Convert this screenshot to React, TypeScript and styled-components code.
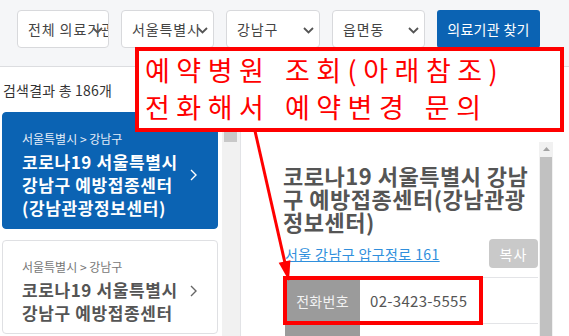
import React from "react";
import styled, { createGlobalStyle } from "styled-components";

const GlobalStyle = createGlobalStyle`
  html, body { margin: 0; padding: 0; background: #ffffff; }
  body {
    font-family: "Noto Sans CJK KR", "Noto Sans", sans-serif;
    overflow: hidden;
  }
  * { box-sizing: border-box; }
`;

const BLUE = "#0b63b3";
const RED = "#ff0000";

const Page = styled.div`
  position: relative;
  width: 569px;
  height: 336px;
  overflow: hidden;
  display: flex;
  flex-direction: column;
  background: #fff;
`;

const TopBar = styled.div`
  height: 67px;
  flex: none;
  background: #f5f6f8;
  border-bottom: 1px solid #dcdde0;
  display: flex;
  align-items: flex-start;
  gap: 12px;
  padding: 10px 0 0 17px;
`;

const SelectBox = styled.div<{ $w: number }>`
  position: relative;
  width: ${(p) => p.$w}px;
  height: 38px;
  background: #fff;
  border: 1px solid #d8d9dc;
  border-radius: 4px;
  display: flex;
  align-items: center;
  padding-left: 10px;
  font-size: 14px;
  letter-spacing: 0.9px;
  color: #444;
  white-space: nowrap;
  overflow: hidden;
`;

const SelectArrow = styled.svg`
  position: absolute;
  right: 5px;
  top: 16px;
  width: 11px;
  height: 7px;
`;

const SearchButton = styled.div`
  width: 103px;
  height: 38px;
  background: ${BLUE};
  color: #fff;
  border-radius: 3px;
  font-size: 14px;
  letter-spacing: 0.3px;
  display: flex;
  align-items: center;
  justify-content: center;
`;

const Body = styled.div`
  flex: 1;
  display: flex;
  min-height: 0;
`;

const ListColumn = styled.div`
  width: 241px;
  flex: none;
  display: flex;
  border-right: 1px solid #e2e3e6;
`;

const ListContent = styled.div`
  width: 222px;
  padding: 0 4px 0 2px;
  overflow: hidden;
`;

const ResultCount = styled.div`
  height: 45px;
  display: flex;
  align-items: center;
  padding-left: 1px;
  font-size: 14px;
  letter-spacing: 0.2px;
  color: #333;
`;

const Card = styled.div<{ $active?: boolean }>`
  width: 216px;
  display: flex;
  align-items: center;
  gap: 8px;
  padding: 17px 20px 9px 19px;
  margin-bottom: 11px;
  border-radius: 4px;
  border: 1px solid ${(p) => (p.$active ? BLUE : "#dfe0e3")};
  background: ${(p) => (p.$active ? BLUE : "#fff")};
  color: ${(p) => (p.$active ? "#fff" : "#555")};
`;

const CardText = styled.div`
  flex: 1;
  min-width: 0;
`;

const CardRegion = styled.div<{ $active?: boolean }>`
  font-size: 12px;
  line-height: 18px;
  margin-bottom: 2px;
  color: ${(p) => (p.$active ? "#e6eef8" : "#777")};
`;

const CardTitle = styled.div`
  font-size: 17px;
  font-weight: 700;
  line-height: 23px;
  word-break: keep-all;
  letter-spacing: 0.6px;
`;

const CardChevron = styled.svg`
  width: 7px;
  height: 12px;
  flex: none;
`;

const Track = styled.div`
  width: 18px;
  flex: none;
  background: #f1f1f1;
  padding: 65px 3px 0 2px;
`;

const Thumb = styled.div<{ $h: number }>`
  height: ${(p) => p.$h}px;
  background: #c8c8c8;
`;

const DetailColumn = styled.div`
  flex: 1;
  display: flex;
  align-items: flex-start;
  padding: 75px 16px 0 0;
`;

const DetailContent = styled.div`
  flex: 1;
  padding: 22px 1px 0 42px;
`;

const DetailTitle = styled.div`
  font-size: 22px;
  font-weight: 700;
  line-height: 23px;
  color: #555;
  letter-spacing: 0.5px;
`;

const AddressRow = styled.div`
  margin-top: 6px;
  height: 29px;
  display: flex;
  align-items: center;
  justify-content: space-between;
  padding-left: 2px;
`;

const AddressLink = styled.a`
  font-size: 14px;
  color: #2f8fdc;
  text-decoration: underline;
  letter-spacing: 0.4px;
`;

const CopyButton = styled.div`
  width: 49px;
  height: 29px;
  border-radius: 4px;
  background: #c9c9c9;
  color: #fff;
  font-size: 14px;
  letter-spacing: 1px;
  display: flex;
  align-items: center;
  justify-content: center;
`;

const InfoTable = styled.div`
  margin-top: 9px;
  margin-left: 2px;
  border-top: 1px solid #e3e4e7;
`;

const InfoRow = styled.div`
  display: flex;
  height: 46px;
  border-bottom: 1px solid #e3e4e7;
`;

const InfoLabel = styled.div`
  width: 75px;
  background: #9b9b9b;
  color: #f2f2f2;
  font-size: 14px;
  letter-spacing: 0.3px;
  display: flex;
  align-items: center;
  justify-content: center;
`;

const InfoValue = styled.div`
  padding-left: 10px;
  font-size: 15px;
  letter-spacing: 0.3px;
  color: #555;
  display: flex;
  align-items: center;
`;

const PanelScroll = styled.div`
  width: 14px;
  flex: none;
  align-self: stretch;
  background: #f1f1f1;
  display: flex;
  flex-direction: column;
  align-items: center;
  padding: 5px 1px 0;
`;

const UpArrow = styled.svg`
  width: 7px;
  height: 4px;
  margin-bottom: 6px;
`;

const PanelThumb = styled.div`
  flex: 1;
  width: 12px;
  background: #c1c1c1;
`;

const Callout = styled.div`
  position: absolute;
  left: 135px;
  top: 47px;
  width: 429px;
  height: 85px;
  border: 4px solid ${RED};
  background: #fff;
  padding: 0 0 0 6px;
  color: ${RED};
  font-size: 27px;
  line-height: 37px;
  letter-spacing: 6.5px;
  word-spacing: 2px;
  white-space: nowrap;
`;

const Highlight = styled.div`
  position: absolute;
  left: 283px;
  top: 276px;
  width: 200px;
  height: 49px;
  border: 4px solid ${RED};
`;

const ArrowLayer = styled.svg`
  position: absolute;
  left: 0;
  top: 0;
  width: 569px;
  height: 336px;
  pointer-events: none;
`;

const Chevron = () => (
  <SelectArrow viewBox="0 0 11 7">
    <path d="M1 1l4.5 4.5L10 1" fill="none" stroke="#555" strokeWidth="1.8" />
  </SelectArrow>
);

const selects = [
  { label: "전체 의료기관", w: 92 },
  { label: "서울특별시", w: 93 },
  { label: "강남구", w: 94 },
  { label: "읍면동", w: 93 },
];

const ListCard = ({ active, children }: { active?: boolean; children: React.ReactNode }) => (
  <Card $active={active}>
    <CardText>
      <CardRegion $active={active}>서울특별시 &gt; 강남구</CardRegion>
      <CardTitle>{children}</CardTitle>
    </CardText>
    <CardChevron viewBox="0 0 7 12">
      <path
        d="M1 1l5 5-5 5"
        fill="none"
        stroke={active ? "#fff" : "#666"}
        strokeWidth="1.4"
      />
    </CardChevron>
  </Card>
);

export default function App() {
  return (
    <>
      <GlobalStyle />
      <Page>
        <TopBar>
          {selects.map((s) => (
            <SelectBox key={s.label} $w={s.w}>
              {s.label}
              <Chevron />
            </SelectBox>
          ))}
          <SearchButton>의료기관 찾기</SearchButton>
        </TopBar>
        <Body>
          <ListColumn>
            <ListContent>
              <ResultCount>검색결과 총 186개</ResultCount>
              <ListCard active>
                코로나19 서울특별시 강남구 예방접종센터<wbr />(강남관광정보센터)
              </ListCard>
              <ListCard>코로나19 서울특별시 강남구 예방접종센터</ListCard>
            </ListContent>
            <Track>
              <Thumb $h={10} />
            </Track>
          </ListColumn>
          <DetailColumn>
            <DetailContent>
              <DetailTitle>
                코로나19 서울특별시 강남구 예방접종센터(강남관광정보센터)
              </DetailTitle>
              <AddressRow>
                <AddressLink>서울 강남구 압구정로 161</AddressLink>
                <CopyButton>복사</CopyButton>
              </AddressRow>
              <InfoTable>
                <InfoRow>
                  <InfoLabel>전화번호</InfoLabel>
                  <InfoValue>02-3423-5555</InfoValue>
                </InfoRow>
                <InfoRow>
                  <InfoLabel>운영시간</InfoLabel>
                  <InfoValue>09:00 ~ 18:00</InfoValue>
                </InfoRow>
              </InfoTable>
            </DetailContent>
            <PanelScroll>
              <UpArrow viewBox="0 0 7 4">
                <path d="M0 4L3.5 0L7 4Z" fill="#a3a3a3" />
              </UpArrow>
              <PanelThumb />
            </PanelScroll>
          </DetailColumn>
        </Body>
        <Callout>
          <div>예약병원 조회(아래참조)</div>
          <div>전화해서 예약변경 문의</div>
        </Callout>
        <Highlight />
        <ArrowLayer viewBox="0 0 569 336">
          <line x1="255" y1="131" x2="285" y2="263" stroke={RED} strokeWidth="3" />
          <polygon points="289,281 290.4,260.2 278.7,262.8" fill={RED} />
        </ArrowLayer>
      </Page>
    </>
  );
}
